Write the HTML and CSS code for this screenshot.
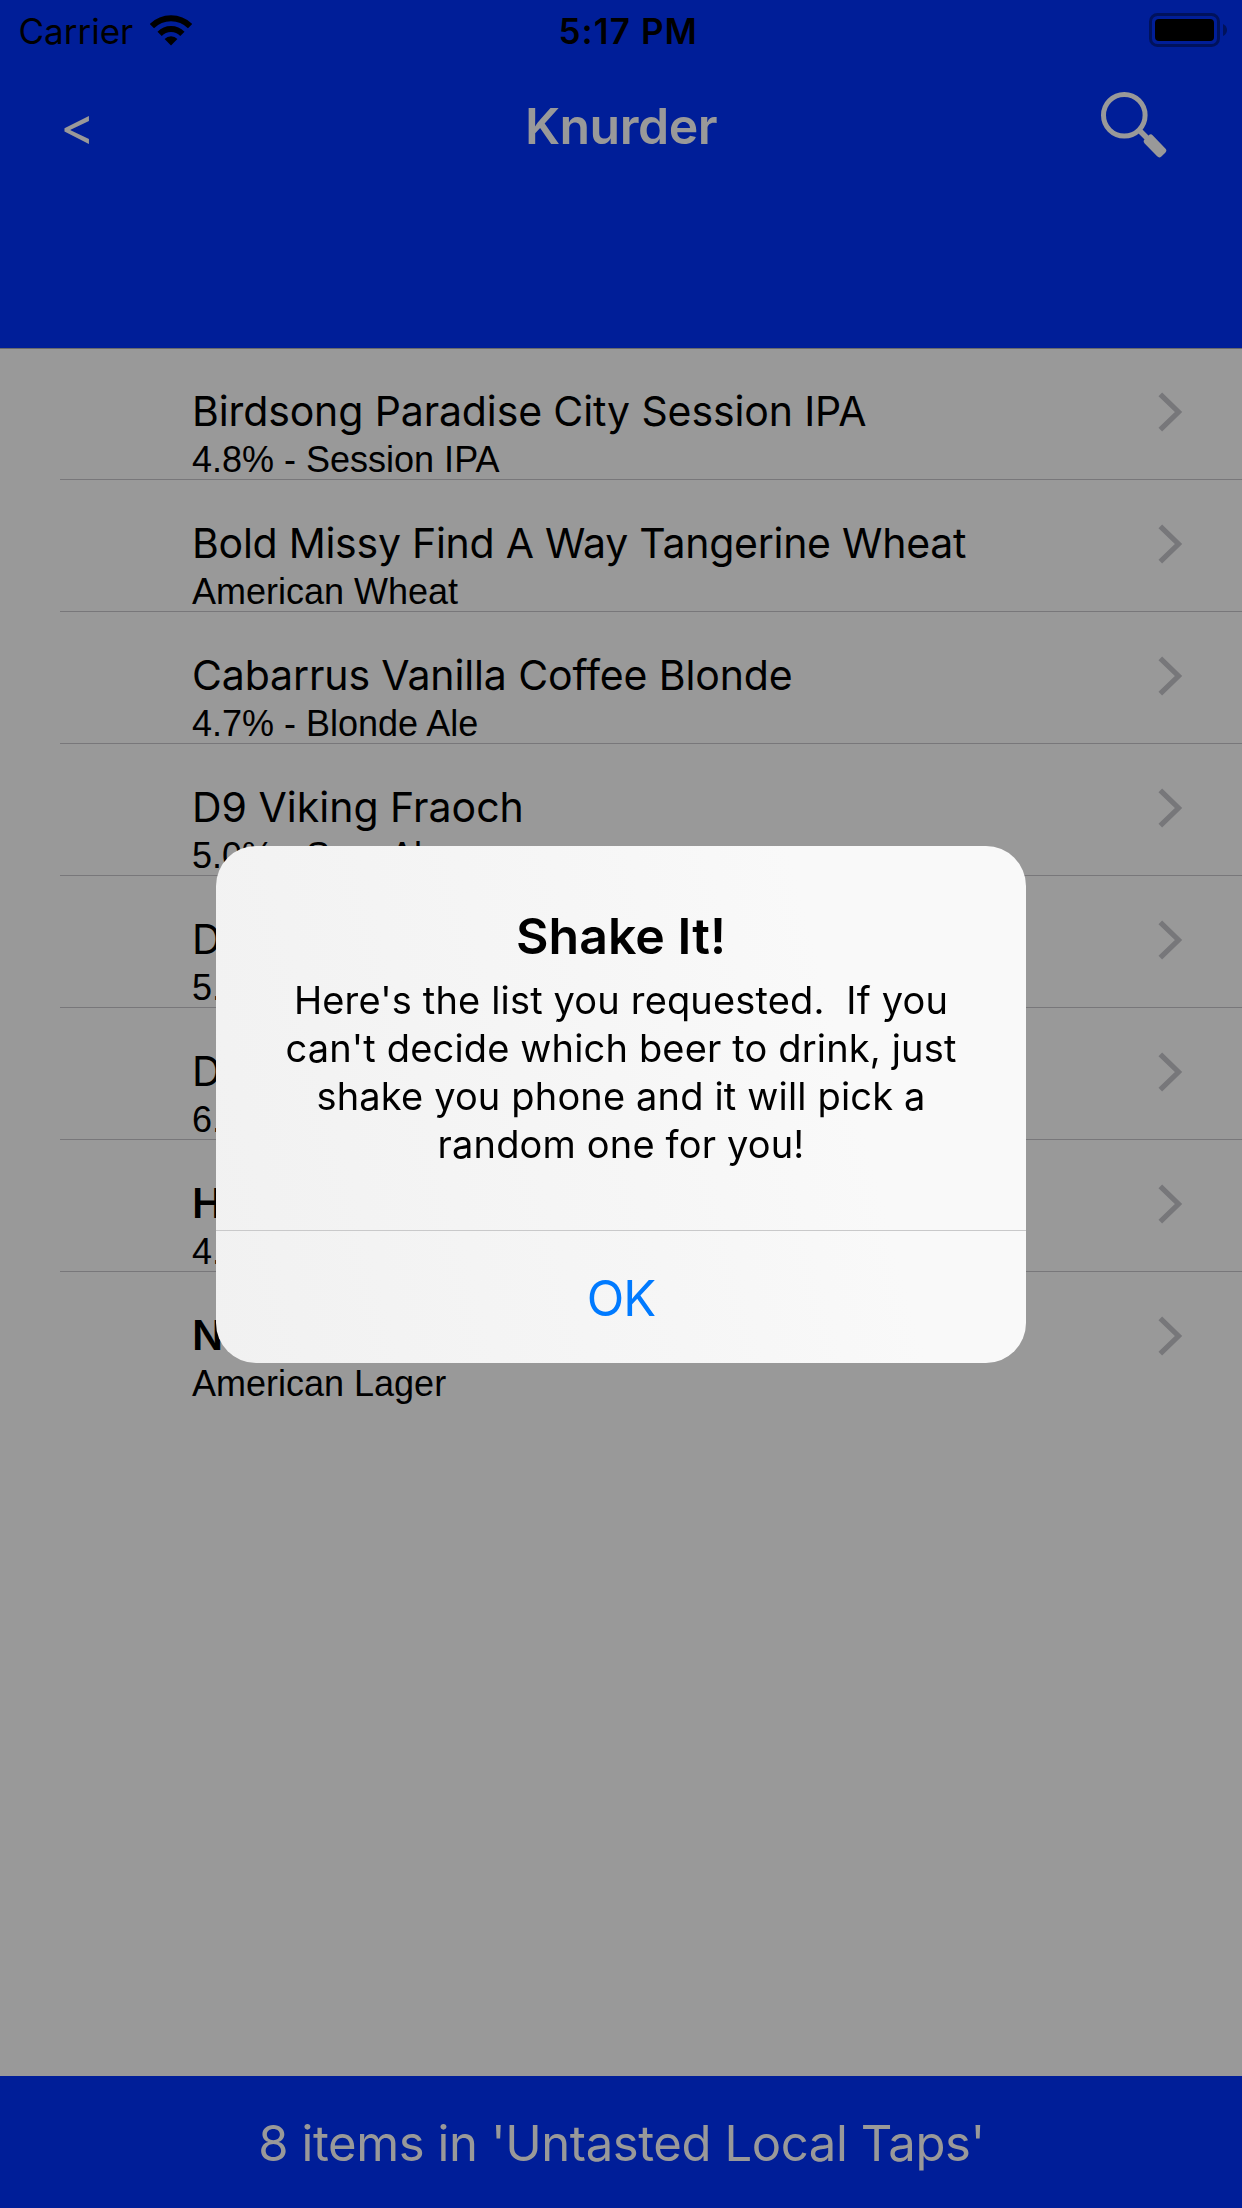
FILE: index.html
```
<!DOCTYPE html>
<html lang="en">
<head>
<meta charset="utf-8">
<title>Knurder</title>
<link rel="stylesheet" href="styles.css">
</head>
<body>
<svg width="0" height="0" class="defs" aria-hidden="true">
  <symbol id="chevron" viewBox="0 0 26 42"><path d="M3.3 3.3 21.5 21 3.3 38.7" fill="none" stroke="#77777a" stroke-width="5.2"/></symbol>
</svg>
<div class="screen">
  <header class="header">
    <div class="status">
      <div class="carrier">
        <span>Carrier</span>
        <svg class="wifi" width="42" height="31" viewBox="0 0 42 31">
          <g fill="none" stroke="#000" stroke-width="6">
            <path d="M1.9 11.1A27 27 0 0 1 40.1 11.1"/>
            <path d="M9.6 18.8A16.1 16.1 0 0 1 32.4 18.8"/>
          </g>
          <path d="M21 30.4 14.6 24A9 9 0 0 1 27.4 24Z"/>
        </svg>
      </div>
      <div class="time">5:17 PM</div>
      <svg class="battery" width="79" height="34" viewBox="0 0 79 34">
        <rect x="1.5" y="1.5" width="68" height="31" rx="7" fill="none" stroke="#00125c" stroke-width="3"/>
        <rect x="6" y="6" width="59" height="22" rx="4"/>
        <path d="M74 11Q78 13 78 17T74 23Z" fill="#00125c"/>
      </svg>
    </div>
    <nav class="nav">
      <span class="back">&lt;</span>
      <h1 class="nav-title">Knurder</h1>
      <svg class="search" width="68" height="68" viewBox="1100 90 68 68">
        <circle cx="1124.3" cy="115.2" r="20.8" fill="none" stroke="#999" stroke-width="5"/>
        <path d="M1139 130 1149 140" stroke="#999" stroke-width="5.5"/>
        <rect x="1143" y="140.2" width="24" height="11.4" rx="3" fill="#999" transform="rotate(46 1155 145.9)"/>
      </svg>
    </nav>
  </header>

  <ul class="list">
    <li class="row"><div class="text"><div class="name">Birdsong Paradise City Session IPA</div><div class="style">4.8% - Session IPA</div></div><svg class="chevron"><use href="#chevron"/></svg></li>
    <li class="row"><div class="text"><div class="name name-tight">Bold Missy Find A Way Tangerine Wheat</div><div class="style">American Wheat</div></div><svg class="chevron"><use href="#chevron"/></svg></li>
    <li class="row"><div class="text"><div class="name">Cabarrus Vanilla Coffee Blonde</div><div class="style">4.7% - Blonde Ale</div></div><svg class="chevron"><use href="#chevron"/></svg></li>
    <li class="row"><div class="text"><div class="name name-normal">D9 Viking Fraoch</div><div class="style">5.0% - Sour Ale</div></div><svg class="chevron"><use href="#chevron"/></svg></li>
    <li class="row"><div class="text"><div class="name">D</div><div class="style">5.</div></div><svg class="chevron"><use href="#chevron"/></svg></li>
    <li class="row"><div class="text"><div class="name">D</div><div class="style">6.</div></div><svg class="chevron"><use href="#chevron"/></svg></li>
    <li class="row"><div class="text"><div class="name name-bold">H</div><div class="style">4.</div></div><svg class="chevron"><use href="#chevron"/></svg></li>
    <li class="row"><div class="text"><div class="name name-bold">N</div><div class="style">American Lager</div></div><svg class="chevron"><use href="#chevron"/></svg></li>
  </ul>

  <footer class="footer">8 items in 'Untasted Local Taps'</footer>
</div>

<div class="overlay">
  <div class="alert" role="alertdialog">
    <div class="alert-body">
      <h2 class="alert-title">Shake It!</h2>
      <p class="alert-message">Here's the list you requested.  If you
can't decide which beer to drink, just
shake you phone and it will pick a
random one for you!</p>
    </div>
    <button class="alert-button">OK</button>
  </div>
</div>
</body>
</html>
```
FILE: styles.css
```
* { box-sizing: border-box; margin: 0; padding: 0; }
body { width: 1242px; height: 2208px; overflow: hidden; font-family: Inter, "Liberation Sans", sans-serif; color: #000; }
.defs { position: absolute; }
.screen { display: flex; flex-direction: column; height: 2208px; background: #999; }

.header { height: 349px; background: #001e98; border-bottom: 1px solid #6a6a6b; flex: none; }
.status { display: grid; grid-template-columns: 1fr auto 1fr; height: 60px; padding: 10px 14px 0 18.5px; font-size: 35px; line-height: 42px; }
.carrier { display: flex; gap: 17px; }
.wifi { margin-top: 5px; }
.time { font-weight: 600; letter-spacing: 1.1px; padding-left: 10px; }
.battery { justify-self: end; margin-top: 3px; }
.nav { display: grid; grid-template-columns: 1fr auto 1fr; align-items: center; height: 132px; padding: 0 74px 0 60px; color: #999; line-height: 60px; }
.back { font-size: 53px; }
.nav-title { font-size: 50px; font-weight: 600; letter-spacing: -0.5px; padding-left: 14px; }
.search { justify-self: end; margin-bottom: 4px; }

.list { flex: 1; list-style: none; margin-top: -1px; }
.row { display: flex; justify-content: space-between; height: 132px; margin-left: 60px; padding: 38px 59px 0 132px; border-bottom: 1px solid #78777a; }
.row:last-child { border-bottom: 0; }
.name { font-size: 41px; line-height: 50px; letter-spacing: -0.12px; }
.name-tight { letter-spacing: -0.26px; }
.name-normal { letter-spacing: 0; }
.name-bold { font-weight: 600; }
.style { font: 36px/47px "Liberation Sans", Arial, sans-serif; }
.chevron { width: 26px; height: 42px; margin-top: 5px; }

.footer { flex: none; height: 132px; padding: 38px 0 0 1px; background: #001e98; color: #999; font-size: 49px; line-height: 59px; letter-spacing: -0.41px; text-align: center; }

.overlay { position: fixed; inset: 0; display: flex; align-items: center; justify-content: center; padding-top: 1px; }
.alert { display: flex; flex-direction: column; width: 810px; height: 517px; border-radius: 40px; overflow: hidden; background: linear-gradient(75deg, #f1f1f1, #f6f6f6 50%, #f9f9f9 75%); }
.alert-body { height: 384px; padding-top: 60px; text-align: center; }
.alert-title { font-size: 50px; line-height: 60px; font-weight: 600; letter-spacing: 0.05px; }
.alert-message { margin-top: 10px; font-size: 38px; line-height: 48px; letter-spacing: 0.16px; white-space: pre; }
.alert-button { flex: 1; border: 0; border-top: 1px solid #c9c9ca; background: none; color: #007aff; font: 400 49px/59px Inter, sans-serif; letter-spacing: -1px; padding-top: 2px; }
```
